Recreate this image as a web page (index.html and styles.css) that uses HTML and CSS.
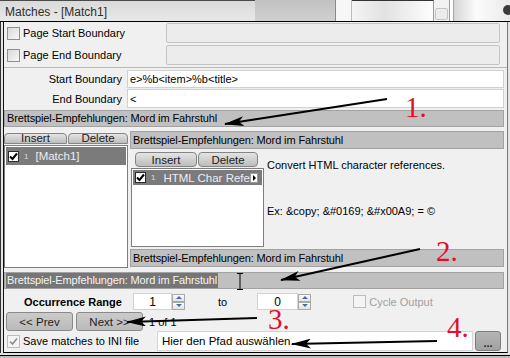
FILE: index.html
```html
<!DOCTYPE html>
<html lang="de">
<head>
  <meta charset="utf-8">
  <title>Matches - [Match1]</title>
  <link rel="stylesheet" href="styles.css">
</head>
<body>

  <div class="titlebar">
    <div class="tb-title">Matches - [Match1]</div>
    <div class="tb-dark"></div>
    <div class="tb-pane"></div>
    <div class="tb-glass"></div>
    <div class="tb-knob"><span></span></div>
    <div class="tb-rail"></div>
    <div class="tb-end"><span class="tb-dot"></span></div>
  </div>

  <div class="frame">
    <div class="window">

      <div class="page-row">
        <span class="cb"></span>
        <span class="cb-label">Page Start Boundary</span>
        <div class="page-field"></div>
      </div>
      <div class="page-row second">
        <span class="cb"></span>
        <span class="cb-label">Page End Boundary</span>
        <div class="page-field"></div>
      </div>

      <div class="sep"></div>

      <div class="bound-row">
        <label for="start">Start Boundary</label>
        <input id="start" type="text" value="e>%b<item>%b<title>">
      </div>
      <div class="bound-row end">
        <label for="end">End Boundary</label>
        <input id="end" type="text" value="<">
      </div>

      <div class="bar main-bar">Brettspiel-Empfehlungen: Mord im Fahrstuhl</div>

      <div class="split">
        <div class="left-pane">
          <div class="tabs small">
            <button class="tab insert">Insert</button>
            <button class="tab delete">Delete</button>
          </div>
          <div class="list left-list">
            <div class="item">
              <span class="cb list-cb"><svg width="9" height="9" viewBox="0 0 9 9"><path d="M1 4.5 L3.5 7 L8 1.5" fill="none" stroke="#000" stroke-width="2"/></svg></span>
              <span class="idx">1</span>
              <span class="name">[Match1]</span>
            </div>
          </div>
        </div>

        <div class="right-pane">
          <div class="bar">Brettspiel-Empfehlungen: Mord im Fahrstuhl</div>
          <div class="inner">
            <div class="inner-left">
              <div class="tabs">
                <button class="tab insert">Insert</button>
                <button class="tab delete">Delete</button>
              </div>
              <div class="list inner-list">
                <div class="item">
                  <span class="cb list-cb"><svg width="9" height="9" viewBox="0 0 9 9"><path d="M1 4.5 L3.5 7 L8 1.5" fill="none" stroke="#000" stroke-width="2"/></svg></span>
                  <span class="idx">1</span>
                  <span class="name">HTML Char Refere</span>
                  <span class="more"></span>
                </div>
              </div>
            </div>
            <div class="desc">
              <p>Convert HTML character references.</p>
              <p class="example">Ex: &amp;copy; &amp;#0169; &amp;#x00A9; = &copy;</p>
            </div>
          </div>
          <div class="bar bottom-bar">Brettspiel-Empfehlungen: Mord im Fahrstuhl</div>
        </div>
      </div>

      <div class="bar sel-bar"><span class="selected">Brettspiel-Empfehlungen: Mord im Fahrstuhl</span></div>

      <div class="range-row">
        <span class="range-label">Occurrence Range</span>
        <input class="num from" type="text" value="1">
        <span class="spin"><i class="up"></i><i class="down"></i></span>
        <span class="to">to</span>
        <input class="num till" type="text" value="0">
        <span class="spin"><i class="up"></i><i class="down"></i></span>
        <span class="cb off cycle-cb"></span>
        <span class="cycle">Cycle Output</span>
      </div>

      <div class="nav-row">
        <button class="nav prev">&lt;&lt; Prev</button>
        <button class="nav next">Next &gt;&gt;</button>
        <span class="count">1 of 1</span>
      </div>

      <div class="save-row">
        <span class="cb off"><svg width="9" height="9" viewBox="0 0 9 9"><path d="M1 4.5 L3.5 7 L8 1.5" fill="none" stroke="#8c8c8c" stroke-width="1.6"/></svg></span>
        <span class="cb-label">Save matches to INI file</span>
        <input class="path" type="text" value="Hier den Pfad auswählen.">
        <button class="browse">...</button>
      </div>

    </div>
  </div>
  <div class="footer"></div>

  <!-- Anmerkungen über dem Screenshot -->
  <svg class="notes" width="510" height="358" viewBox="0 0 510 358">
    <defs>
      <marker id="head" markerWidth="20" markerHeight="10" refX="19" refY="5" orient="auto" markerUnits="userSpaceOnUse">
        <path d="M0 0 L20 5 L0 10 L5 5 Z" fill="#000"/>
      </marker>
    </defs>
    <g stroke="#000" stroke-width="2" fill="none">
      <line x1="387" y1="99" x2="225" y2="124" marker-end="url(#head)"/>
      <line x1="420" y1="249" x2="281" y2="280" marker-end="url(#head)"/>
      <line x1="257" y1="318" x2="127" y2="322" marker-end="url(#head)"/>
      <line x1="437" y1="341" x2="292" y2="344" marker-end="url(#head)"/>
    </g>
    <path d="M237 273.5 h6 M240 273.5 v16 M237 289.5 h6" stroke="#000" stroke-width="1" fill="none"/>
    <g class="num-note">
      <text x="405" y="117">1.</text>
      <text x="436" y="261">2.</text>
      <text x="268" y="329">3.</text>
      <text x="447" y="337">4.</text>
    </g>
  </svg>

</body>
</html>
```

FILE: styles.css
```css
* { box-sizing: border-box; }

body {
  margin: 0;
  width: 510px;
  height: 358px;
  overflow: hidden;
  position: relative;
  font-family: "Liberation Sans", Arial, sans-serif;
  font-size: 11px;
  color: #000;
  background: #c9c9c9;
}

/* Titelleiste mit Resten der Fenster dahinter */
.titlebar { display: flex; height: 22px; border-bottom: 1px solid #000; }
.tb-title {
  width: 255px;
  padding: 4px 0 0 5px;
  font-size: 12px;
  color: #2e2e2e;
  background: linear-gradient(#dadada, #e8e8e8);
  border-top: 1px solid #4a4a4a;
}
.tb-dark { width: 81px; background: linear-gradient(#c2c2c2, #d0d0d0); border-right: 1px solid #8a8a8a; }
.tb-pane { width: 16px; background: #f7f7f7; border-right: 1px solid #bdbdbd; }
.tb-glass { width: 82px; background: linear-gradient(90deg, #f4f4f4, #e2e2e2 40%, #fdfdfd); border-top: 1px solid #333; border-right: 1px solid #9a9a9a; }
.tb-knob { width: 16px; padding: 8px 1px 0 1px; background: #f2f2f2; border-right: 1px solid #a0a0a0; }
.tb-knob span { display: block; height: 12px; border: 1px solid #c4c4c4; border-radius: 2px; background: #ececec; }
.tb-rail { width: 4px; background: #fff; border-right: 1px solid #a8a8a8; }
.tb-end { flex: 1; display: flex; justify-content: flex-end; padding: 5px 0 0 0; background: linear-gradient(90deg, #d6d6d6, #fbfbfb 40%, #eaeaea); }
.tb-dot { width: 10px; height: 10px; border-radius: 50%; background: #3b3b3b; margin-right: -3px; }

.frame {
  display: flex;
  height: 331px;
  padding-left: 2px;
  border-left: 1px solid #333;
  background: #e4e4e4;
}
.window {
  width: 505px;
  height: 331px;
  padding-bottom: 1px;
  background: #f0f0f0;
  border-left: 1px solid #111;
  border-right: 1px solid #777;
  border-bottom: 1px solid #000;
}
.footer { height: 5px; background: linear-gradient(#e2e2e2 0 2px, #000 2px 3px, #bdbdbd 3px); }

/* Checkboxen */
.cb {
  display: flex;
  align-items: center;
  justify-content: center;
  width: 13px;
  height: 13px;
  flex: none;
  border: 1px solid #8e8f8f;
  background: linear-gradient(135deg, #d9d9d9, #f8f8f8);
}
.cb.off { border-color: #bcbcbc; background: #f4f4f4; }
.list-cb { width: 11px; height: 11px; border-color: #2a2a2a; background: #fff; }
.cb-label { margin-left: 3px; white-space: nowrap; }

/* Seitengrenzen */
.page-row { display: flex; align-items: center; height: 20px; margin-top: 1px; padding-left: 3px; }
.page-row.second { margin-top: 2px; }
.page-field {
  width: 334px;
  height: 20px;
  margin: 0 7px 0 auto;
  border: 1px solid #c4c4c4;
  border-radius: 2px;
  background: #ececec;
}
.sep { height: 1px; margin-top: 2px; background: #b9b9b9; }

.bound-row { display: flex; align-items: center; height: 18px; margin: 2px 3px 0 0; }
.bound-row.end { height: 19px; margin-top: 1px; }
.bound-row label { width: 118px; text-align: right; }
.bound-row input {
  flex: 1;
  height: 100%;
  margin-left: 5px;
  padding: 0 2px;
  border: 1px solid #d0d0d0;
  background: #fff;
  font: inherit;
  color: #000;
}

/* Graue Balken */
.bar {
  height: 17px;
  padding-left: 2px;
  line-height: 15px;
  border: 1px solid #a2a2a2;
  background: #c0c0c0;
  white-space: nowrap;
  overflow: hidden;
  letter-spacing: -0.12px;
}
.main-bar { margin: 2px 3px 0 0; }

.split { display: flex; height: 137px; margin: 4px 3px 0 0; }
.left-pane { width: 124px; display: flex; flex-direction: column; }
.right-pane { flex: 1; margin-left: 2px; display: flex; flex-direction: column; }
.right-pane .bar { height: 18px; line-height: 16px; }

.tabs { display: flex; height: 15px; margin-top: 3px; padding-left: 5px; }
.tabs.small { height: 11px; margin-top: 2px; padding-left: 0; }
.tab {
  height: 100%;
  padding: 0;
  font: inherit;
  font-size: 11.5px;
  line-height: 12px;
  color: #1c1c1c;
  border: 1px solid #858585;
  border-radius: 4px;
  background: linear-gradient(#e4e4e4, #bdbdbd);
}
.tab.insert { width: 62px; }
.tab.delete { width: 60px; margin-left: 1px; }
.tabs.small .tab { line-height: 9px; border-radius: 4px 4px 0 0; }
.tabs.small .insert { width: 63px; }

.list { background: #fff; border: 1px solid #7d7d7d; }
.left-list { flex: 1; margin-top: 1px; padding: 1px 1px 0 1px; }
.inner-list { height: 79px; margin: 1px 0 0 1px; width: 133px; padding: 1px 1px 0 1px; }

.item {
  display: flex;
  align-items: center;
  height: 18px;
  padding-left: 2px;
  background: #7b7b7b;
  color: #ececf6;
  white-space: nowrap;
  overflow: hidden;
}
.inner-list .item { height: 15px; }
.idx { font-size: 8px; margin-left: 5px; color: #dcdcdc; }
.name { margin-left: 7px; font-size: 11.5px; }
.inner-list .name { margin-left: 8px; width: 87px; overflow: hidden; }
.more {
  width: 8px;
  height: 10px;
  flex: none;
  display: flex;
  align-items: center;
  justify-content: center;
  background: #fff;
  border: 1px solid #9a9a9a;
}
.more::after { content: ""; border-left: 3px solid #000; border-top: 3px solid transparent; border-bottom: 3px solid transparent; }

.inner { display: flex; height: 99px; }
.inner-left { width: 134px; }
.desc { padding: 9px 0 0 3px; }
.desc p { margin: 0; line-height: 14px; }
.desc .example { margin-top: 32px; }
.bottom-bar { margin-top: 1px; }

.sel-bar { margin: 4px 3px 0 0; padding-left: 1px; }
.selected { display: inline-block; padding: 0 1px; background: #767676; color: #f4f4f4; line-height: 15px; }

/* Bereich */
.range-row { display: flex; align-items: center; height: 17px; margin-top: 4px; padding-left: 20px; }
.range-label { font-weight: bold; width: 109px; }
.num {
  height: 17px;
  padding: 0;
  font: inherit;
  font-size: 12px;
  text-align: center;
  border: 1px solid #d2d2d2;
  background: #fff;
}
.num.from { width: 39px; }
.num.till { width: 41px; margin-left: 30px; }
.spin { display: flex; flex-direction: column; width: 13px; height: 16px; }
.spin i {
  flex: 1;
  display: flex;
  align-items: center;
  justify-content: center;
  border: 1px solid #a9a9a9;
  background: linear-gradient(#fcfcfc, #e2e2e2);
}
.spin .up::after { content: ""; border-bottom: 3px solid #4b6aa6; border-left: 3px solid transparent; border-right: 3px solid transparent; }
.spin .down::after { content: ""; border-top: 3px solid #4b6aa6; border-left: 3px solid transparent; border-right: 3px solid transparent; }
.to { margin-left: 33px; }
.cycle-cb { margin-left: 42px; }
.cycle { margin-left: 3px; color: #a0a0a0; }

/* Navigation */
.nav-row { display: flex; align-items: center; height: 19px; margin-top: 2px; padding-left: 2px; }
.nav {
  width: 67px;
  height: 19px;
  padding: 0;
  font: inherit;
  font-size: 11.5px;
  color: #222;
  border: 1px solid #8a8a8a;
  border-radius: 3px;
  background: linear-gradient(#cbcbcb, #bababa);
}
.next { margin-left: 3px; }
.count { margin-left: 6px; }

.save-row { display: flex; align-items: center; height: 20px; padding-left: 3px; }
.path {
  width: 316px;
  height: 20px;
  margin-left: auto;
  padding: 0 4px;
  font: inherit;
  font-size: 11.5px;
  color: #000;
  border: 1px solid #d4d4d4;
  background: #fff;
}
.browse {
  width: 26px;
  height: 20px;
  margin: 0 6px 0 2px;
  padding: 4px 0 0 0;
  font: inherit;
  font-weight: bold;
  color: #222;
  border: 1px solid #7d7d7d;
  border-radius: 3px;
  background: linear-gradient(#b4b4b4, #a2a2a2);
}

.notes { position: absolute; left: 0; top: 0; pointer-events: none; }
.num-note { fill: #e0102a; font-family: "Liberation Serif", "Times New Roman", serif; font-size: 29px; }
```
